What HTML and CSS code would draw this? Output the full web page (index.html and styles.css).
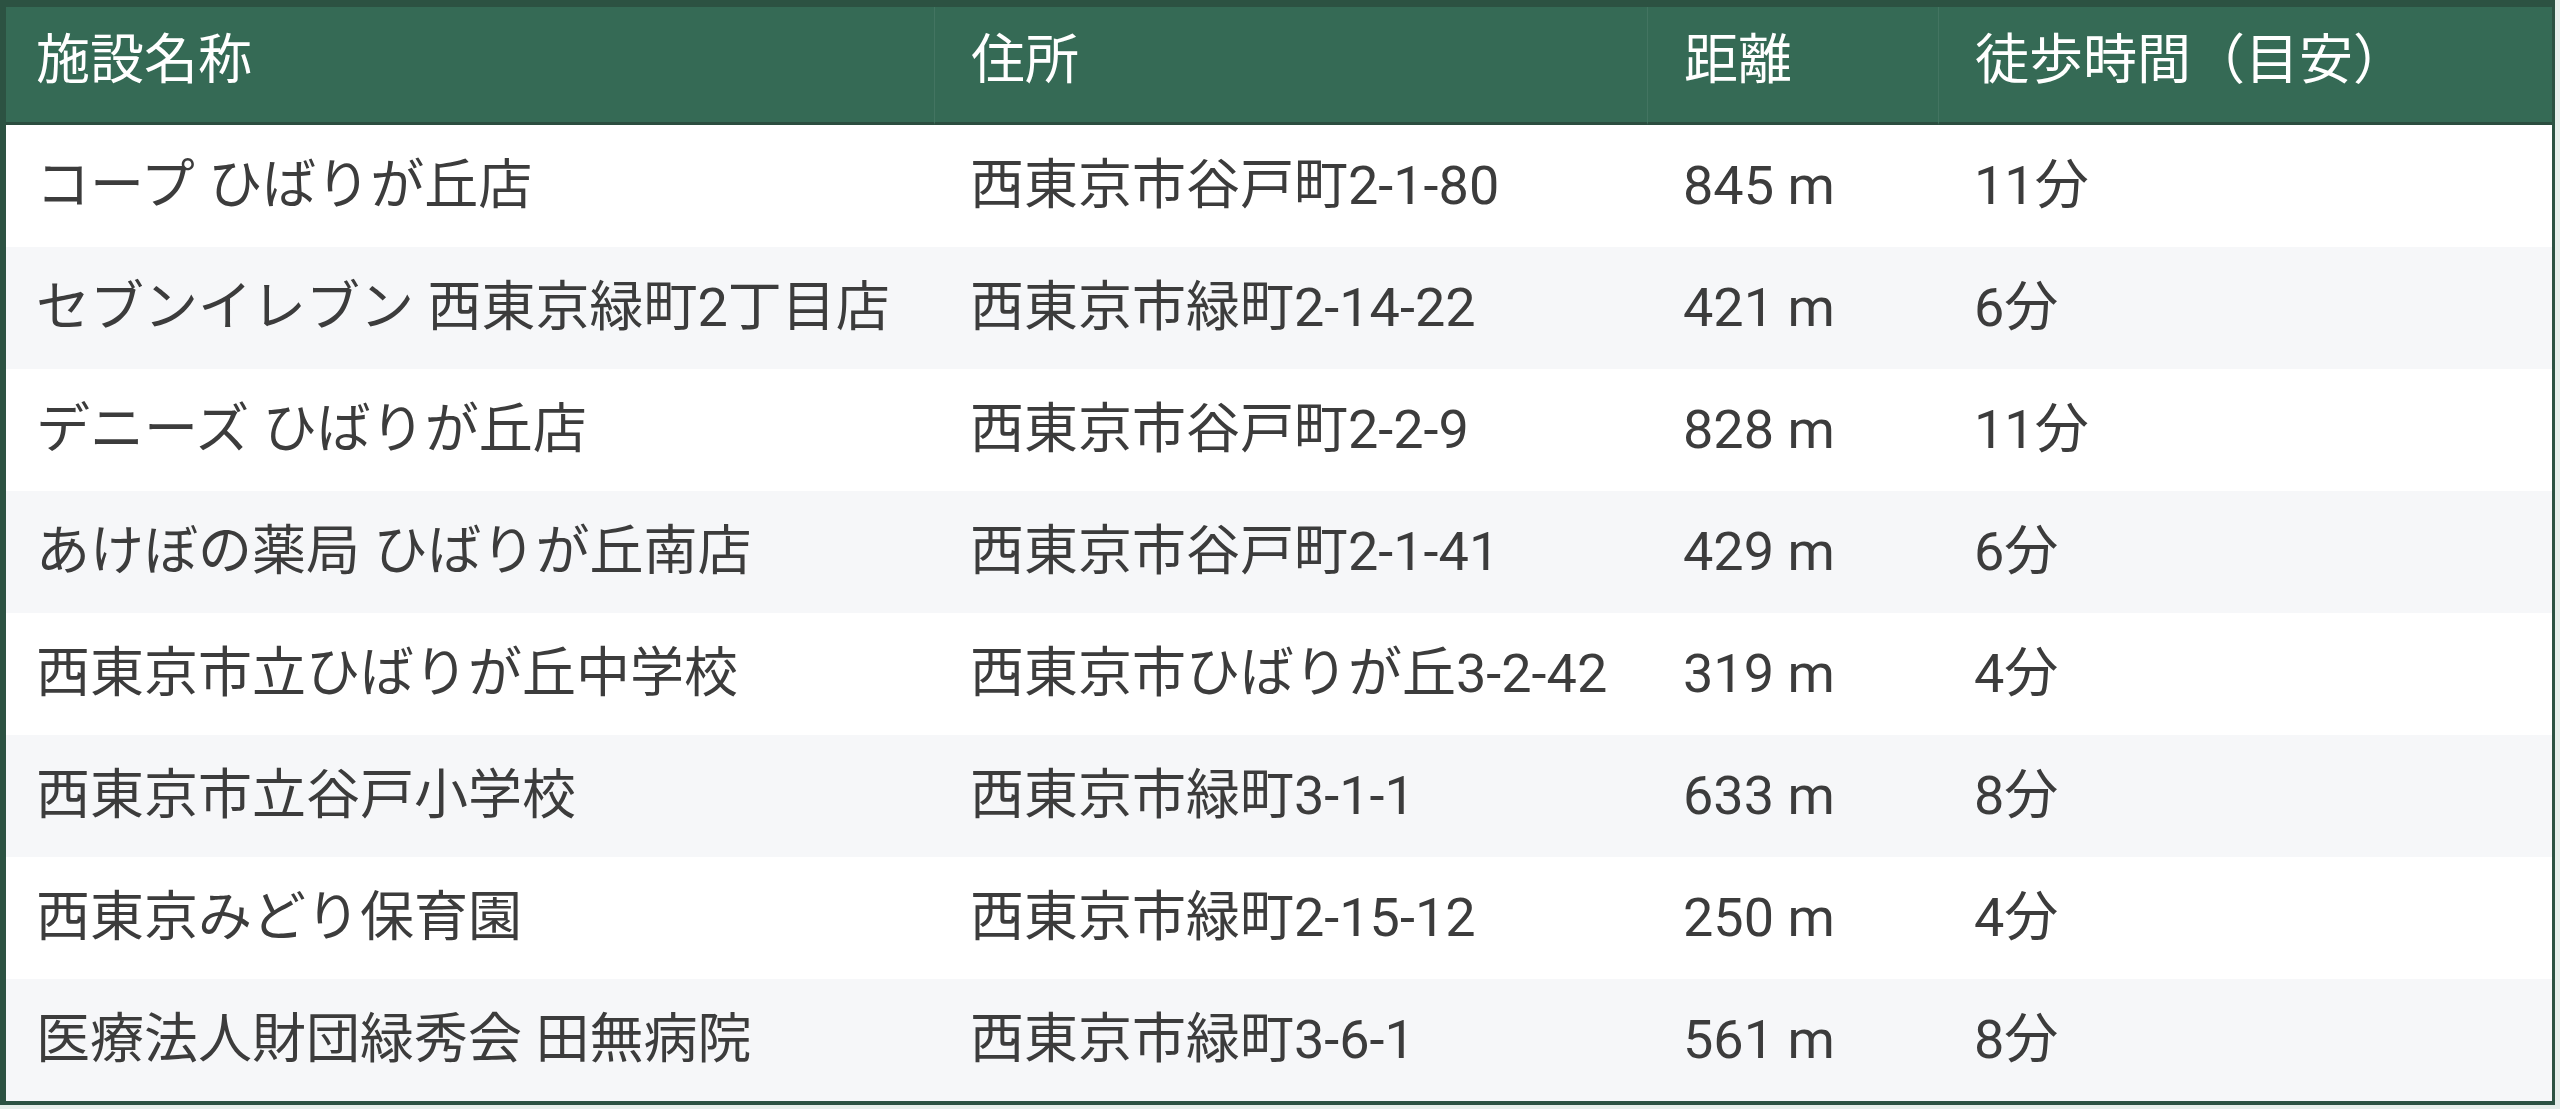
FILE: index.html
```html
<!DOCTYPE html>
<html lang="ja">
<head>
<meta charset="utf-8">
<title>周辺施設</title>
<link rel="stylesheet" href="styles.css">
</head>
<body>
<div class="wrap">
<table class="facilities">
  <colgroup>
    <col class="c-name">
    <col class="c-addr">
    <col class="c-dist">
    <col class="c-time">
  </colgroup>
  <thead>
    <tr><th>施設名称</th><th>住所</th><th>距離</th><th>徒歩時間（目安）</th></tr>
  </thead>
  <tbody>
    <tr><td>コープ ひばりが丘店</td><td>西東京市谷戸町2-1-80</td><td>845 m</td><td>11分</td></tr>
    <tr><td>セブンイレブン 西東京緑町2丁目店</td><td>西東京市緑町2-14-22</td><td>421 m</td><td>6分</td></tr>
    <tr><td>デニーズ ひばりが丘店</td><td>西東京市谷戸町2-2-9</td><td>828 m</td><td>11分</td></tr>
    <tr><td>あけぼの薬局 ひばりが丘南店</td><td>西東京市谷戸町2-1-41</td><td>429 m</td><td>6分</td></tr>
    <tr><td>西東京市立ひばりが丘中学校</td><td>西東京市ひばりが丘3-2-42</td><td>319 m</td><td>4分</td></tr>
    <tr><td>西東京市立谷戸小学校</td><td>西東京市緑町3-1-1</td><td>633 m</td><td>8分</td></tr>
    <tr><td>西東京みどり保育園</td><td>西東京市緑町2-15-12</td><td>250 m</td><td>4分</td></tr>
    <tr><td>医療法人財団緑秀会 田無病院</td><td>西東京市緑町3-6-1</td><td>561 m</td><td>8分</td></tr>
  </tbody>
</table>
</div>
</body>
</html>
```
FILE: styles.css
```css
html, body {
  margin: 0;
  padding: 0;
  background: #e6eeea;
}

.wrap {
  width: 2555px;
}

.facilities {
  width: 100%;
  border-collapse: separate;
  border-spacing: 0;
  table-layout: fixed;
  border-style: solid;
  border-color: #2c5242;
  border-width: 7px 3px 4px 6px;
  font-family: Roboto, "Noto Sans CJK JP", sans-serif;
  font-size: 54px;
  color: #3c3c3c;
}

.c-name { width: 928px; }
.c-addr { width: 713px; }
.c-dist { width: 291px; }
.c-time { width: auto; }

.facilities th {
  background: #356a55;
  color: #ffffff;
  font-weight: 400;
  text-align: left;
  line-height: 64px;
  padding: 22px 30px 29px 30px;
  border-bottom: 3px solid #2b4d3f;
  white-space: nowrap;
}

.facilities th + th {
  padding-left: 36px;
  border-left: 1px solid rgba(255, 255, 255, 0.07);
}

.facilities td {
  line-height: 64px;
  padding: 29px 30px 29px 30px;
  white-space: nowrap;
  background: #ffffff;
}

.facilities td + td {
  padding-left: 36px;
}

.facilities tbody tr:nth-child(even) td {
  background: #f6f7f9;
}
```
